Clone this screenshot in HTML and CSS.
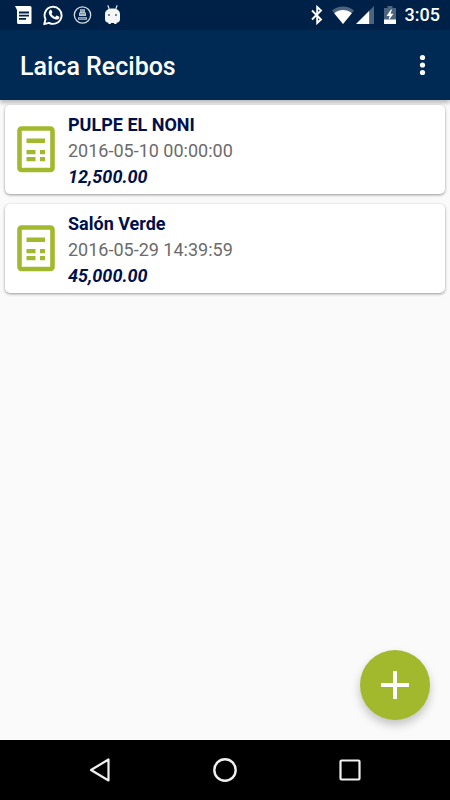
FILE: index.html
```html
<!DOCTYPE html>
<html lang="es">
<head>
<meta charset="utf-8">
<meta name="viewport" content="width=device-width, initial-scale=1">
<title>Laica Recibos</title>
<link rel="stylesheet" href="styles.css">
</head>
<body>
<div class="status">
  <div class="status-group notifications">
    <svg width="20" height="22" viewBox="0 0 20 22" aria-hidden="true"><path fill="#fff" d="M2 2h15a1.500 1.500 0 0 1 1.500 1.500v15A1.500 1.500 0 0 1 17 20H5.500A1.500 1.500 0 0 1 4 18.500V6z"/><path stroke="#002147" stroke-width="1.800" d="M6 8.500h10M6 11.700h10M6 14.900h7"/></svg>
    <svg width="20" height="22" viewBox="0 0 20 22" aria-hidden="true"><path fill="none" stroke="#fff" stroke-width="1.900" stroke-linejoin="round" d="M1.200 20.200l1.300-5A8.500 8.500 0 1 1 6 18.800z"/><path fill="#fff" d="M6.900 6.200c.5-.5 1.300-.5 1.600.1l.8 1.800c.2.500-.1.900-.8 1.600.9 1.700 2 2.700 3.700 3.400l1.100-1.300c.2-.3.500-.3.900-.1l1.800.9c.5.300.4.700.2 1.300-.4 1.200-1.900 1.800-3.300 1.500-3.700-.8-6.700-3.900-7.100-6.500-.1-1.100.4-2.100 1.100-2.700z"/></svg>
    <svg width="20" height="22" viewBox="0 0 20 22" aria-hidden="true"><circle cx="9.500" cy="11" r="8.200" fill="none" stroke="#d3dae3" stroke-width="1.300"/><path fill="#b9c4d0" d="M7 5.200h5v3.300h1V12H6V8.500h1zM5 13.200h9v2.500H5z"/><path stroke="#4c6178" stroke-width=".7" d="M7.500 7h4M7 9.700h5M6 14.500h7"/></svg>
    <svg width="20" height="22" viewBox="0 0 20 22" aria-hidden="true"><path fill="none" stroke="#dfe5ea" stroke-width="1.200" stroke-linecap="round" d="M5 1.700l1.500 4M14 1.700l-1.500 4"/><path fill="#f4f6f8" d="M2 10c0-3.400 3-5.500 7.500-5.500S17 6.600 17 10v5.500c0 2-1.500 3-3.500 3.300V20h-2.300v-1H7.800v1H5.500v-1.200C3.500 18.500 2 17.500 2 15.500z"/><circle cx="6" cy="11" r="1" fill="#4c6178"/><circle cx="13" cy="11" r="1" fill="#4c6178"/></svg>
  </div>
  <div class="status-group system">
    <svg width="14" height="20" viewBox="0 0 14 20" aria-hidden="true"><path fill="none" stroke="#fff" stroke-width="1.900" d="M2 5.500l9 9L7.200 18V2L11 5.500l-9 9"/></svg>
    <svg class="wifi" width="22" height="18" viewBox="0 0 22 18" aria-hidden="true"><path fill="#4d647f" d="M11 18L0 4.500C6.500-.8 15.500-.8 22 4.500z"/><path fill="#fff" d="M11 18L2.200 7.200c5.200-4.400 12.400-4.400 17.600 0z"/></svg>
    <svg class="signal" width="18" height="18" viewBox="0 0 18 18" aria-hidden="true"><path fill="#fff" d="M13.500 4.500V18H0z"/><path fill="#4d647f" d="M13.500 4.500L18 0v18h-4.500z"/></svg>
    <svg class="battery" width="14" height="20" viewBox="0 0 14 20" aria-hidden="true"><path fill="#4d647f" d="M4.500 1h5v2H13v16H1V3h3.500z"/><path fill="#fff" d="M1 14.500h12V19H1zM8 4.500L3.500 11h3L5.500 15.500l5-6.700h-3l1.500-4.300z"/></svg>
    <time class="clock">3:05</time>
  </div>
</div>
<header class="appbar">
  <h1 class="title">Laica Recibos</h1>
  <button class="menu" type="button" aria-label="Menú"><svg width="8" height="24" viewBox="0 0 8 24" aria-hidden="true"><g fill="#fff"><circle cx="4.500" cy="4.500" r="2.600"/><circle cx="4.500" cy="12" r="2.600"/><circle cx="4.500" cy="19.500" r="2.600"/></g></svg></button>
</header>
<main class="content">
  <ul class="list">
    <li class="card">
      <svg class="receipt" width="38" height="50" viewBox="0 0 38 50" aria-hidden="true"><rect x="2.500" y="2.500" width="33" height="41.500" rx="2" fill="none" stroke="#a2b92d" stroke-width="4.600"/><path fill="#a2b92d" d="M9.500 12.500H28V17H9.500zM9.500 24h9v4.300h-9zM9.500 31h9v4.300h-9zM23 24h5v4.300h-5zM23 31h5v4.300h-5z"/></svg>
      <div class="details">
        <h2 class="name">PULPE EL NONI</h2>
        <time class="date">2016-05-10 00:00:00</time>
        <em class="amount">12,500.00</em>
      </div>
    </li>
    <li class="card">
      <svg class="receipt" width="38" height="50" viewBox="0 0 38 50" aria-hidden="true"><rect x="2.500" y="2.500" width="33" height="41.500" rx="2" fill="none" stroke="#a2b92d" stroke-width="4.600"/><path fill="#a2b92d" d="M9.500 12.500H28V17H9.500zM9.500 24h9v4.300h-9zM9.500 31h9v4.300h-9zM23 24h5v4.300h-5zM23 31h5v4.300h-5z"/></svg>
      <div class="details">
        <h2 class="name">Salón Verde</h2>
        <time class="date">2016-05-29 14:39:59</time>
        <em class="amount">45,000.00</em>
      </div>
    </li>
  </ul>
  <button class="fab" type="button" aria-label="Agregar recibo"><svg width="28" height="28" viewBox="0 0 28 28" aria-hidden="true"><path stroke="#fff" stroke-width="4" d="M14 0v28M0 14h28"/></svg></button>
</main>
<nav class="navbar" aria-label="Sistema">
  <button class="key" type="button" aria-label="Atrás"><svg width="26" height="26" viewBox="0 0 26 26" aria-hidden="true"><path fill="none" stroke="#f0f0f0" stroke-width="2.200" stroke-linejoin="round" d="M21.500 2.500v21L4 13z"/></svg></button>
  <button class="key" type="button" aria-label="Inicio"><svg width="26" height="26" viewBox="0 0 26 26" aria-hidden="true"><circle cx="13" cy="13" r="10.700" fill="none" stroke="#f0f0f0" stroke-width="2.400"/></svg></button>
  <button class="key" type="button" aria-label="Recientes"><svg width="26" height="26" viewBox="0 0 26 26" aria-hidden="true"><rect x="3.500" y="3.500" width="19" height="19" rx="1" fill="none" stroke="#f0f0f0" stroke-width="2.200"/></svg></button>
</nav>
</body>
</html>
```

FILE: styles.css
```css
* {
  box-sizing: border-box;
}

body {
  margin: 0;
  min-height: 100vh;
  display: flex;
  flex-direction: column;
  background: #fafafa;
  font-family: Roboto, "Liberation Sans", sans-serif;
}

button {
  display: flex;
  align-items: center;
  justify-content: center;
  padding: 0;
  border: 0;
  background: none;
  cursor: pointer;
}

svg {
  display: block;
  flex: none;
}

.status {
  display: flex;
  justify-content: space-between;
  align-items: center;
  height: 30px;
  padding: 0 10px 0 13px;
  background: #002147;
}

.status-group {
  display: flex;
  align-items: center;
}

.notifications {
  gap: 10px;
}

.wifi {
  margin-left: 8px;
}

.signal {
  margin-left: 2px;
}

.battery {
  margin-left: 9px;
}

.clock {
  margin-left: 8px;
  color: #fff;
  font-size: 18px;
  font-weight: 500;
  line-height: 30px;
}

.appbar {
  display: flex;
  align-items: center;
  justify-content: space-between;
  height: 70px;
  padding: 0 8px 0 20px;
  background: #002a54;
  box-shadow: 0 3px 4px rgba(0, 0, 0, 0.25);
}

.title {
  margin: 0;
  padding-top: 3px;
  color: #fff;
  font-size: 25px;
  font-weight: 500;
  line-height: 32px;
}

.menu {
  width: 40px;
  height: 48px;
}

.content {
  flex: 1;
  display: flex;
  flex-direction: column;
  justify-content: space-between;
}

.list {
  display: flex;
  flex-direction: column;
  gap: 10px;
  margin: 0;
  padding: 5px;
  list-style: none;
}

.card {
  display: flex;
  align-items: center;
  gap: 13px;
  padding: 7px 12px 4px;
  border-radius: 5px;
  background: #fff;
  box-shadow: 0 1px 3px rgba(0, 0, 0, 0.4);
}

.details {
  display: flex;
  flex-direction: column;
  font-size: 18px;
  line-height: 26px;
}

.name {
  margin: 0;
  color: #00104a;
  font-size: 18px;
  font-weight: 700;
}

.date {
  color: #6b6b6b;
}

.amount {
  color: #00104a;
  font-weight: 700;
}

.fab {
  align-self: flex-end;
  width: 70px;
  height: 70px;
  margin: 20px;
  border-radius: 50%;
  background: #a2b92d;
  box-shadow: 0 5px 10px rgba(0, 0, 0, 0.22);
}

.navbar {
  display: flex;
  justify-content: center;
  gap: 25px;
  height: 60px;
  background: #000;
}

.key {
  width: 100px;
  height: 60px;
}
```
